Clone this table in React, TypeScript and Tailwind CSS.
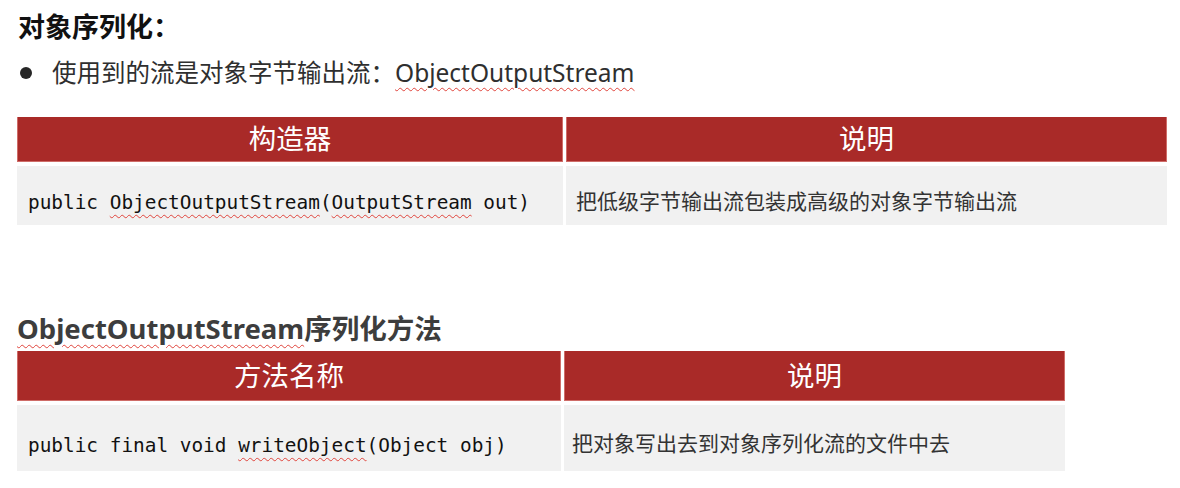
import React from "react";

const sans = "font-['Noto_Sans','Noto_Sans_CJK_SC',sans-serif]";
const mono = "font-['DejaVu_Sans_Mono','Noto_Sans_CJK_SC',monospace]";
const squiggle = "underline decoration-wavy decoration-[#e0443c] decoration-1 underline-offset-[5px]";

function Header({ children, h }: { children: React.ReactNode; h: string }) {
  return (
    <div
      className={`${h} flex items-center justify-center bg-[#a92a28] border-b border-l border-r border-[#cf6c68] text-white text-[27.5px] ${sans}`}
    >
      {children}
    </div>
  );
}

function Cell({ children, h, className = "" }: { children: React.ReactNode; h: string; className?: string }) {
  return (
    <div className={`${h} flex items-center bg-[#f1f1f1] ${className}`}>{children}</div>
  );
}

export default function App() {
  return (
    <div className={`w-[1180px] h-[488px] bg-white overflow-hidden ${sans}`}>
      <div className="pt-[12px] pl-[18px]">
        <div className="h-[30px] leading-[30px] text-[27px] font-bold text-[#111]">对象序列化：</div>
        <div className="mt-[16px] h-[30px] flex items-center text-[24.5px] text-[#2f2f2f] leading-[30px]">
          <span className="ml-[2px] w-[12px] h-[12px] rounded-full bg-[#262626]" />
          <span className="ml-[20px]">
            使用到的流是对象字节输出流：<span className={squiggle}>ObjectOutputStream</span>
          </span>
        </div>
      </div>

      <div className="mt-[29px] ml-[17px] w-[1150px] grid grid-cols-[546px_601px] gap-x-[3px] gap-y-[4px]">
        <Header h="h-[45px]">构造器</Header>
        <Header h="h-[45px]">说明</Header>
        <Cell h="h-[59px]" className="pl-[11px] pt-[14px]">
          <span className={`${mono} text-[19.4px] text-[#111]`}>
            public <span className={squiggle}>ObjectOutputStream</span>(<span className={squiggle}>OutputStream</span> out)
          </span>
        </Cell>
        <Cell h="h-[59px]" className="pl-[10px] pt-[12px]">
          <span className="text-[21px] text-[#333]">把低级字节输出流包装成高级的对象字节输出流</span>
        </Cell>
      </div>

      <div className="mt-[87px] pl-[17px] h-[34px] leading-[34px] text-[27.5px] font-bold text-[#3d3d3d]">
        <span className={squiggle}>ObjectOutputStream</span>序列化方法
      </div>

      <div className="mt-[5px] ml-[17px] w-[1048px] grid grid-cols-[544px_501px] gap-x-[3px] gap-y-[4px]">
        <Header h="h-[50px]">方法名称</Header>
        <Header h="h-[50px]">说明</Header>
        <Cell h="h-[66px]" className="pl-[11px] pt-[16px]">
          <span className={`${mono} text-[19.4px] text-[#111]`}>
            public final void <span className={squiggle}>writeObject</span>(Object obj)
          </span>
        </Cell>
        <Cell h="h-[66px]" className="pl-[8px] pt-[12px]">
          <span className="text-[21px] text-[#333]">把对象写出去到对象序列化流的文件中去</span>
        </Cell>
      </div>
    </div>
  );
}
